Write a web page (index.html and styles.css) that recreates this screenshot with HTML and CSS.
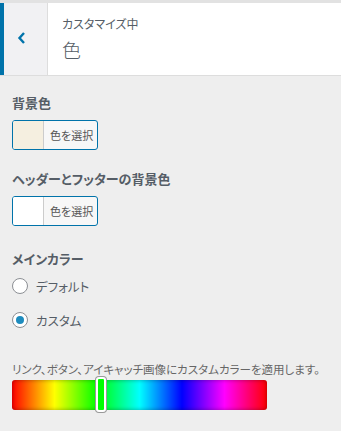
FILE: index.html
```html
<!DOCTYPE html>
<html lang="ja">

<head>
  <meta charset="UTF-8">
  <title>色</title>
  <link rel="stylesheet" href="styles.css">
</head>

<body>
  <div class="panel">
    <div class="panel-head">
      <a class="back" href="javascript:void(0)">
        <svg width="12" height="14" viewBox="0 0 12 14">
          <path d="M8 2 L3.5 7 L8 12" fill="none" stroke="#0073aa" stroke-width="2.4" />
        </svg>
      </a>
      <div class="head-title">
        <span class="head-sub">カスタマイズ中</span>
        <h3>色</h3>
      </div>
    </div>

    <div class="controls">
      <div class="control">
        <span class="control-title">背景色</span>
        <a class="color-btn" href="javascript:void(0)">
          <span class="swatch swatch-cream"></span>
          <span class="color-text">色を選択</span>
        </a>
      </div>

      <div class="control">
        <span class="control-title">ヘッダーとフッターの背景色</span>
        <a class="color-btn" href="javascript:void(0)">
          <span class="swatch"></span>
          <span class="color-text">色を選択</span>
        </a>
      </div>

      <div class="control control-radio">
        <span class="control-title">メインカラー</span>
        <label class="radio"><input type="radio" name="main"> デフォルト</label>
        <label class="radio"><input type="radio" name="main" checked> カスタム</label>
      </div>

      <div class="control">
        <p class="desc">リンク、ボタン、アイキャッチ画像にカスタムカラーを適用します。</p>
        <div class="hue">
          <span class="hue-handle"></span>
        </div>
      </div>
    </div>
  </div>
</body>

</html>
```

FILE: styles.css
```css
body,
div,
p,
h3 {
  margin: 0;
  padding: 0;
}

body {
  background: #eee;
  font: 13px/1.4 "Noto Sans CJK JP", "Noto Sans", sans-serif;
  font-feature-settings: "palt";
  color: #555d66;
}

a {
  text-decoration: none;
  outline: none;
}

.panel {
  border-top: 3px solid #e2e2e2;
}

.panel-head {
  display: flex;
  height: 72px;
  background: #fff;
  border-bottom: 1px solid #ddd;
}

.back {
  display: flex;
  align-items: center;
  justify-content: center;
  box-sizing: border-box;
  width: 48px;
  background: #f1f1f3;
  border-left: 4px solid #0073aa;
  border-right: 1px solid #ddd;
  padding: 0 7px 3px 0;
}

.head-title {
  display: flex;
  flex-direction: column;
  justify-content: center;
  padding: 2px 0 0 14px;
}

.head-sub {
  font-size: 12px;
  line-height: 18px;
  color: #555d66;
}

.head-title h3 {
  font-size: 19px;
  font-weight: 300;
  line-height: 30px;
  margin-top: 2px;
  color: #555d66;
}

.controls {
  padding: 17px 12px 0 12px;
}

.control {
  margin-bottom: 16px;
}

.control-radio {
  padding-top: 4px;
  margin-bottom: 18px;
}

.control-title {
  display: block;
  font-size: 13px;
  font-weight: 600;
  line-height: 20px;
  margin-bottom: 7px;
  color: #555d66;
}

.color-btn {
  display: inline-flex;
  height: 30px;
  box-sizing: border-box;
  border: 1px solid #0073aa;
  border-radius: 3px;
  overflow: hidden;
  background: #f7f7f7;
}

.swatch {
  width: 30px;
  background: #fff;
  border-right: 1px solid #ccc;
}

.swatch-cream {
  background: #f5efe0;
}

.color-text {
  padding: 0 4px 0 6px;
  font-size: 11px;
  line-height: 28px;
  color: #555;
}

.radio {
  display: flex;
  align-items: center;
  height: 20px;
  margin-top: 7px;
  font-size: 12.5px;
  color: #555d66;
}

.radio + .radio {
  margin-top: 14px;
}

.radio input {
  appearance: none;
  width: 16px;
  height: 16px;
  margin: 0 8px 0 0;
  border: 1px solid #8c8f94;
  border-radius: 50%;
  background: #fff;
  box-sizing: border-box;
  display: grid;
  place-items: center;
}

.radio input:checked::before {
  content: "";
  width: 8px;
  height: 8px;
  border-radius: 50%;
  background: #1e8cbe;
}

.desc {
  font-size: 11.5px;
  line-height: 18px;
  white-space: nowrap;
  color: #666;
  margin-top: 30px;
  margin-bottom: 2px;
}

.hue {
  position: relative;
  width: 255px;
  height: 30px;
  border-radius: 3px;
  background: linear-gradient(to right, #f00, #ff0, #0f0, #0ff, #00f, #f0f, #f00);
  box-shadow: inset 0 0 4px rgba(0, 0, 0, 0.35);
}

.hue-handle {
  position: absolute;
  left: 84px;
  top: -3px;
  width: 6px;
  height: 31px;
  background: #0f0;
  border: 2px solid #fff;
  border-radius: 3px;
  box-shadow: 0 0 0 1px #999;
}
```
